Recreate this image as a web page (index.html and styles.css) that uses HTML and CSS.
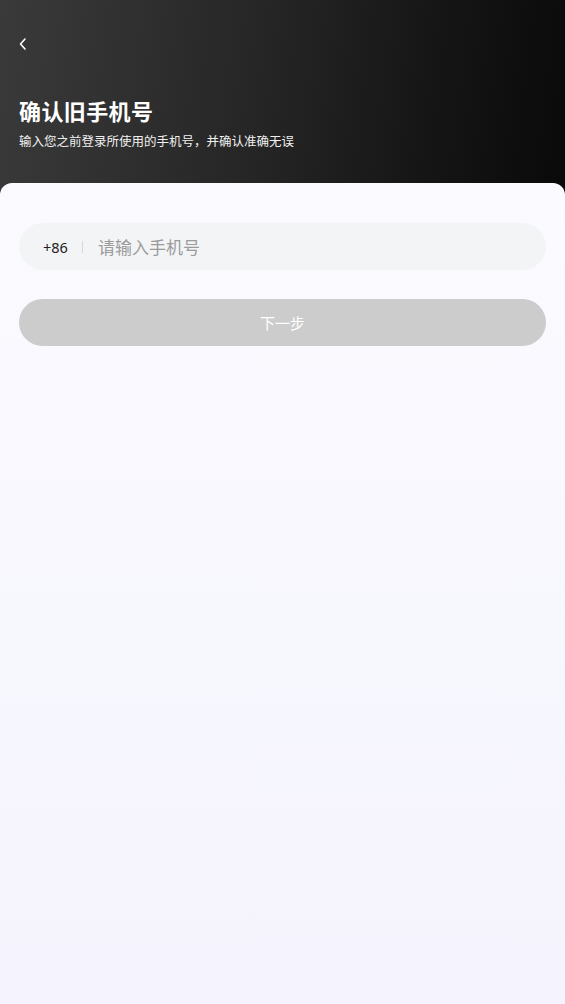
FILE: index.html
```html
<!DOCTYPE html>
<html lang="zh-CN">
<head>
<meta charset="utf-8">
<title>确认旧手机号</title>
<link rel="stylesheet" href="styles.css">
</head>
<body>
<div class="page">
  <header class="hero">
    <div class="nav">
      <svg class="back" width="10" height="14" viewBox="0 0 10 14"><path d="M7 2 L2.5 7 L7 12" fill="none" stroke="#fff" stroke-width="1.6" stroke-linecap="round" stroke-linejoin="round"/></svg>
    </div>
    <h1 class="title">确认旧手机号</h1>
    <p class="subtitle">输入您之前登录所使用的手机号，并确认准确无误</p>
  </header>
  <main class="card">
    <div class="field">
      <span class="code">+86</span>
      <span class="divider"></span>
      <span class="placeholder">请输入手机号</span>
    </div>
    <button class="next">下一步</button>
  </main>
</div>
</body>
</html>
```

FILE: styles.css
```css
* { box-sizing: border-box; }
html, body { margin: 0; padding: 0; }
body {
  font-family: "Noto Sans CJK SC", "Noto Sans", sans-serif;
  background: #000;
}
.page {
  width: 565px;
  height: 1004px;
  display: flex;
  flex-direction: column;
  background: linear-gradient(97deg, #3a3a3a 0%, #252525 40%, #151515 65%, #080808 88%, #000 100%);
  overflow: hidden;
}
.hero {
  height: 183px;
  flex: none;
  padding: 0 19px;
  color: #fff;
}
.nav {
  height: 95px;
  padding-top: 37px;
}
.back { display: block; margin-left: -1px; }
.title {
  margin: 0;
  font-size: 22px;
  font-weight: 700;
  line-height: 30px;
  letter-spacing: 0.4px;
}
.subtitle {
  margin: 7px 0 0;
  font-size: 12.5px;
  line-height: 18px;
  color: #f0f0f0;
}
.card {
  flex: 1;
  border-radius: 12px 12px 0 0;
  background: linear-gradient(180deg, #fafaff 0%, #f8f8fe 40%, #f5f4fe 100%);
  padding: 40px 19px 0;
  display: flex;
  flex-direction: column;
  gap: 29px;
}
.field {
  height: 47px;
  border-radius: 24px;
  background: #f3f4f6;
  display: flex;
  align-items: center;
  padding-left: 24px;
}
.code {
  font-family: "Noto Sans", sans-serif;
  font-size: 14.5px;
  color: #222;
}
.divider {
  width: 1px;
  height: 12px;
  background: #d8d8d8;
  margin: 0 15px 0 14px;
}
.placeholder {
  font-size: 17px;
  color: #9b9b9b;
}
.next {
  height: 47px;
  border: none;
  border-radius: 24px;
  background: #cccccc;
  color: #fff;
  font-family: "Noto Sans CJK SC", sans-serif;
  font-size: 15px;
  padding: 0;
}
```
